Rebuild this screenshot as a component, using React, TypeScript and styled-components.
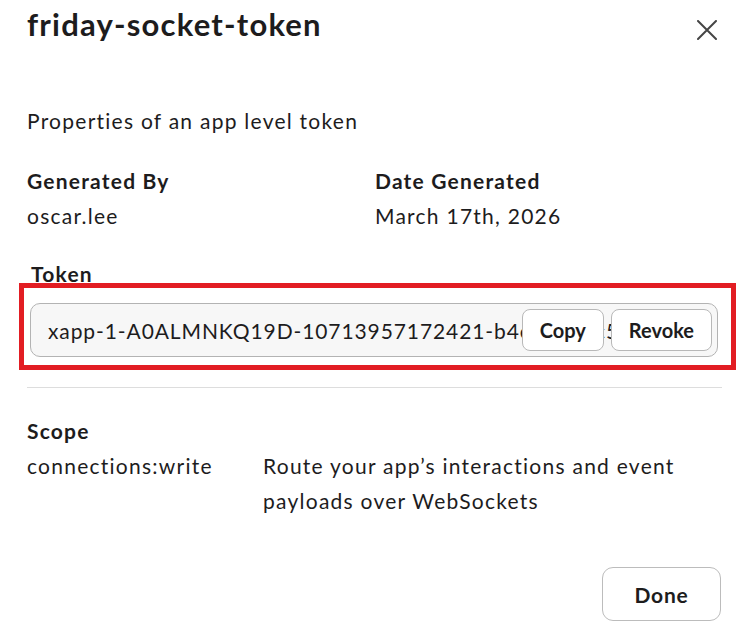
import styled, { createGlobalStyle } from 'styled-components';

const GlobalStyle = createGlobalStyle`
	html, body {
		margin: 0;
		padding: 0;
		background: #ffffff;
	}

	body {
		font-family: Lato, 'Noto Sans', sans-serif;
		color: #1d1c1d;
		-webkit-font-smoothing: antialiased;
	}
`;

const TOKEN = 'xapp-1-A0ALMNKQ19D-10713957172421-b4e1d9a2c57f03b8e6a4d2c1f9e7b5a3d1c8f6e4';

export default function App() {
	return (
		<>
			<GlobalStyle />
			<Modal>
				<Header>
					<Title>friday-socket-token</Title>
					<CloseButton aria-label="Close">
						<svg width="20" height="20" viewBox="0 0 20 20">
							<path
								d="M1 1 L19 19 M19 1 L1 19"
								stroke="#454545"
								strokeWidth="2"
								strokeLinecap="round"
								fill="none"
							/>
						</svg>
					</CloseButton>
				</Header>

				<Description>Properties of an app level token</Description>

				<InfoGrid>
					<Field>
						<Label>Generated By</Label>
						<Value>oscar.lee</Value>
					</Field>
					<Field>
						<Label>Date Generated</Label>
						<Value>March 17th, 2026</Value>
					</Field>
				</InfoGrid>

				<TokenLabel>Token</TokenLabel>
				<Highlight>
					<TokenField>
						<TokenText>{TOKEN}</TokenText>
						<TokenActions>
							<SmallButton>Copy</SmallButton>
							<SmallButton>Revoke</SmallButton>
						</TokenActions>
					</TokenField>
				</Highlight>

				<Divider />

				<Label>Scope</Label>
				<ScopeRow>
					<Value>connections:write</Value>
					<Value>Route your app’s interactions and event payloads over WebSockets</Value>
				</ScopeRow>

				<Footer>
					<DoneButton>Done</DoneButton>
				</Footer>
			</Modal>
		</>
	);
}

const Modal = styled.div`
	padding: 0 19px 0 27px;
	display: flex;
	flex-direction: column;
`;

const Header = styled.div`
	display: flex;
	flex-direction: row;
	justify-content: space-between;
	align-items: flex-start;
	height: 46px;
`;

const Title = styled.h1`
	margin: 0;
	font-size: 31px;
	line-height: 48px;
	font-weight: 700;
	letter-spacing: 1.2px;
	white-space: nowrap;
`;

const CloseButton = styled.button`
	margin: 20px 5px 0 0;
	padding: 0;
	border: none;
	background: none;
	width: 20px;
	height: 20px;
	display: flex;
	cursor: pointer;
`;

const Description = styled.p`
	margin: 57px 0 0;
	font-size: 21px;
	line-height: 35px;
	letter-spacing: 1.25px;
`;

const InfoGrid = styled.div`
	margin-top: 25px;
	display: grid;
	grid-template-columns: 348px 1fr;
`;

const Field = styled.div`
	display: flex;
	flex-direction: column;
`;

const Label = styled.div`
	font-size: 21px;
	line-height: 35px;
	font-weight: 700;
	letter-spacing: 1.2px;
`;

const Value = styled.div`
	font-size: 21px;
	line-height: 35px;
	letter-spacing: 1.25px;
`;

const TokenLabel = styled.div`
	margin: 31px 0 0 4px;
	font-size: 21px;
	line-height: 19px;
	font-weight: 700;
	letter-spacing: 1.2px;
`;

const Highlight = styled.div`
	margin: 0 -14px 0 -8px;
	padding: 15px 13px 8px 6px;
	border: 5px solid #e21d23;
`;

const TokenField = styled.div`
	position: relative;
	height: 52px;
	border: 1px solid #b3b3b3;
	border-radius: 10px;
	background: #f7f7f7;
	display: flex;
	align-items: center;
`;

const TokenText = styled.div`
	flex: 1;
	min-width: 0;
	overflow: hidden;
	margin-right: 40px;
	padding-left: 17px;
	font-size: 21px;
	letter-spacing: 0.9px;
	white-space: nowrap;
	color: #1d1c1d;
`;

const TokenActions = styled.div`
	position: absolute;
	top: 5px;
	right: 5px;
	display: flex;
	gap: 7px;
`;

const SmallButton = styled.button`
	height: 42px;
	padding: 0 17px;
	border: 1px solid #b8b8b8;
	border-radius: 8px;
	background: #ffffff;
	font-family: Lato, 'Noto Sans', sans-serif;
	font-size: 20px;
	font-weight: 700;
	color: #1d1c1d;
	cursor: pointer;
`;

const Divider = styled.hr`
	margin: 17px 0 25px;
	border: none;
	border-top: 1px solid #dddddd;
`;

const ScopeRow = styled.div`
	display: grid;
	grid-template-columns: 236px 1fr;
`;

const Footer = styled.div`
	margin-top: 49px;
	display: flex;
	justify-content: flex-end;
	padding-right: 1px;
`;

const DoneButton = styled.button`
	width: 119px;
	height: 54px;
	border: 1px solid #bcbcbc;
	border-radius: 11px;
	background: #ffffff;
	font-family: Lato, 'Noto Sans', sans-serif;
	font-size: 21px;
	font-weight: 700;
	letter-spacing: 0.8px;
	color: #1d1c1d;
	cursor: pointer;
`;
